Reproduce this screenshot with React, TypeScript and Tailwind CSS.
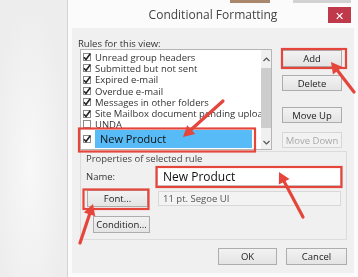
import React from "react";

const font = { fontFamily: '"Open Sans", "Noto Sans", sans-serif' };

function Arrow({ x1, y1, x2, y2 }: { x1: number; y1: number; x2: number; y2: number }) {
  const dx = x2 - x1;
  const dy = y2 - y1;
  const len = Math.hypot(dx, dy);
  const ux = dx / len;
  const uy = dy / len;
  const hl = 11;
  const hw = 6;
  const bx = x2 - ux * hl;
  const by = y2 - uy * hl;
  const lx = bx - uy * hw;
  const ly = by + ux * hw;
  const rx = bx + uy * hw;
  const ry = by - ux * hw;
  return (
    <g>
      <line x1={x1} y1={y1} x2={bx + ux * 1} y2={by + uy * 1} stroke="#e5463c" strokeWidth={3.2} strokeLinecap="round" />
      <polygon points={`${x2},${y2} ${lx},${ly} ${rx},${ry}`} fill="#e5463c" />
    </g>
  );
}

function Check({ checked = true }: { checked?: boolean }) {
  return (
    <div className="w-[8px] h-[8px] border border-[#8a8a8a] bg-white flex items-center justify-center shrink-0">
      {checked && (
        <svg width="8" height="8" viewBox="0 0 8 8" className="shrink-0">
          <path d="M1 4.2 L3 6.5 L7.2 0.8" stroke="#222" strokeWidth="1.6" fill="none" />
        </svg>
      )}
    </div>
  );
}

function Btn({ children, className = "", disabled = false }: { children: React.ReactNode; className?: string; disabled?: boolean }) {
  return (
    <div
      className={
        "flex items-center justify-center text-[9.5px] leading-[11px] border " +
        (disabled
          ? "border-[#d6d6d6] bg-[#f2f2f2] text-[#a8a8a8] "
          : "border-[#adadad] bg-[linear-gradient(#f2f2f2,#e4e4e4)] text-[#222] ") +
        className
      }
    >
      {children}
    </div>
  );
}

const rules = [
  "Unread group headers",
  "Submitted but not sent",
  "Expired e-mail",
  "Overdue e-mail",
  "Messages in other folders",
  "Site Mailbox document pending upload",
];

export default function App() {
  return (
    <div className="relative w-[358px] h-[277px] overflow-hidden flex bg-[#ededed]" style={font}>
      <div className="w-[67px] h-full bg-[radial-gradient(ellipse_at_45%_60%,#f8f8f8_0%,#ededed_70%)]" />
      <div className="w-[1px] h-full bg-[#d4d4d4]" />
      <div className="flex-1 flex flex-col bg-[#fbfbfb] blur-[0.35px]">
        {/* title bar */}
        <div className="h-[28px] flex flex-col">
          <div className="h-[3px] flex">
            <div className="ml-[162px] w-[40px] bg-[#a8876c]" />
            <div className="ml-[23px] w-[58px] bg-[#d2d2d2]" />
          </div>
          <div className="relative flex-1 flex items-center justify-center">
            <span className="text-[12px] leading-[14px] text-[#444] -mt-[2px]">Conditional Formatting</span>
            <div className="absolute right-[7px] top-[4px] w-[23px] h-[16px] bg-[#c0394b] flex items-center justify-center text-white text-[11px] leading-none">
              ✕
            </div>
          </div>
        </div>
        {/* panel */}
        <div className="mx-[4px] h-[245px] bg-[#f0f0f0] flex flex-col">
          <div className="ml-[6px] mt-[9px] h-[12px] flex items-center text-[9.5px] leading-[11px] text-[#333]">Rules for this view:</div>
          <div className="flex">
            {/* list */}
            <div className="ml-[8px] w-[192px] h-[101px] bg-white border border-[#b5b5b5] flex">
              <div className="flex-1 flex flex-col pt-[1.5px] overflow-hidden">
                {rules.map((r) => (
                  <div key={r} className="h-[11.3px] flex items-center shrink-0 overflow-hidden">
                    <div className="ml-[2px]"><Check /></div>
                    <span className="ml-[4px] text-[9.5px] leading-[11px] text-[#333] whitespace-nowrap">{r}</span>
                  </div>
                ))}
                <div className="h-[10.4px] flex items-start shrink-0 overflow-hidden">
                  <div className="ml-[2px] mt-[1px]"><Check checked={false} /></div>
                  <span className="ml-[4px] text-[9.5px] text-[#333] whitespace-nowrap leading-[10px] mt-[1px]">UNDA</span>
                </div>
                <div className="h-[18px] flex items-center shrink-0">
                  <div className="ml-[2px]"><Check /></div>
                  <div className="ml-[4px] w-[157px] h-full bg-[#56bbf6] flex items-center">
                    <span className="ml-[5px] text-[11px] leading-[13px] text-[#111]">New Product</span>
                  </div>
                </div>
              </div>
              <div className="w-[10px] h-full bg-[#f0f0f0] flex flex-col items-center">
                <div className="h-[18px] flex items-center justify-center">
                  <svg width="7" height="5" viewBox="0 0 7 5"><path d="M0.5 4 L3.5 1 L6.5 4" stroke="#555" strokeWidth="1.2" fill="none" /></svg>
                </div>
                <div className="w-[10px] h-[60px] bg-[#cdcdcd]" />
                <div className="flex-1" />
                <div className="h-[14px] flex items-center justify-center">
                  <svg width="7" height="5" viewBox="0 0 7 5"><path d="M0.5 1 L3.5 4 L6.5 1" stroke="#555" strokeWidth="1.2" fill="none" /></svg>
                </div>
              </div>
            </div>
            {/* buttons */}
            <div className="ml-[10px] w-[60px] flex flex-col">
              <Btn className="mt-[1px] h-[17px]">Add</Btn>
              <Btn className="mt-[8px] h-[16px]">Delete</Btn>
              <Btn className="mt-[16px] h-[16px]">Move Up</Btn>
              <Btn className="mt-[9px] h-[16px]" disabled>Move Down</Btn>
            </div>
          </div>
          {/* group */}
          <div className="ml-[8px] mt-[1px] w-[267px] h-[89px] border border-[#dcdcdc] flex flex-col">
            <div className="ml-[5px] mt-[1px] h-[10px] flex items-center text-[9.5px] leading-[11px] text-[#444]">Properties of selected rule</div>
            <div className="mt-[4px] h-[19px] flex items-center">
              <span className="ml-[5px] w-[71px] text-[9.5px] leading-[11px] text-[#333]">Name:</span>
              <div className="w-[184px] h-[19px] bg-white border border-[#c8c8c8] flex items-center">
                <span className="ml-[5px] text-[12px] leading-[14px] text-[#111]">New Product</span>
              </div>
            </div>
            <div className="mt-[4px] h-[17px] flex items-center">
              <Btn className="ml-[6px] w-[61px] h-[17px]">Font...</Btn>
              <div className="ml-[10px] w-[183px] h-[15px] bg-[#f3f3f3] border border-[#d8d8d8] flex items-center">
                <span className="ml-[4px] text-[9.5px] leading-[11px] text-[#555]">11 pt. Segoe UI</span>
              </div>
            </div>
            <Btn className="ml-[12px] mt-[9px] w-[57px] h-[17px]">Condition...</Btn>
          </div>
          <div className="mt-[8px] flex">
            <Btn className="ml-[146px] w-[59px] h-[17px]">OK</Btn>
            <Btn className="ml-[9px] w-[61px] h-[17px]">Cancel</Btn>
          </div>
        </div>
      </div>
      {/* annotations */}
      <svg className="absolute left-0 top-0 blur-[0.3px]" width="358" height="277" viewBox="0 0 358 277">
        <g fill="none" stroke="#e5463c" strokeWidth="2.2">
          <rect x="282" y="49" width="64" height="19" />
          <rect x="79" y="128.5" width="176" height="23" />
          <rect x="156.5" y="167" width="185" height="20" />
          <rect x="83.5" y="189.5" width="65" height="19.5" />
        </g>
        <Arrow x1={354} y1={92} x2={331} y2={62} />
        <Arrow x1={223} y1={101} x2={183} y2={137} />
        <Arrow x1={80} y1={243} x2={93} y2={204} />
        <Arrow x1={303} y1={217} x2={279} y2={172} />
      </svg>
    </div>
  );
}
